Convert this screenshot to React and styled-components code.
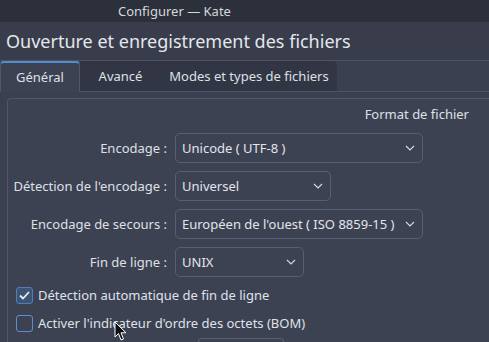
import React from 'react';
import styled, { createGlobalStyle } from 'styled-components';

const GlobalStyle = createGlobalStyle`
  html, body {
    margin: 0;
    padding: 0;
    background: #3b4050;
    overflow: hidden;
  }
  body {
    font-family: "Noto Sans", "DejaVu Sans", sans-serif;
    font-size: 13px;
    color: #dfe2e8;
  }
`;

const Window = styled.div`
  position: relative;
  width: 489px;
  height: 342px;
  overflow: hidden;
  background: #3b4050;
`;

const TitleBar = styled.div`
  height: 22px;
  background: #2c303a;
  color: #d4d7dd;
  font-size: 13px;
  display: flex;
  align-items: center;
  padding-left: 118px;
`;

const Header = styled.div`
  height: 38px;
  display: flex;
  align-items: center;
  padding-left: 6px;
  font-size: 18px;
  color: #e4e7ec;
  background: #383c4b;
  border-bottom: 1px solid #4d5262;
`;

const TabBar = styled.div`
  display: flex;
  height: 30px;
  border-bottom: 1px solid #4f5465;
`;

const Tab = styled.div`
  display: flex;
  align-items: center;
  justify-content: center;
  width: ${p => p.w}px;
  margin-bottom: ${p => (p.active ? '-1px' : '0')};
  background: ${p => (p.active ? '#3d4253' : '#323644')};
  border-left: ${p => (p.active ? '1px solid #525768' : 'none')};
  border-right: ${p => (p.active ? '1px solid #525768' : 'none')};
  border-top: ${p => (p.active ? '2px solid #4f8fd0' : 'none')};
  border-radius: ${p => (p.active ? '4px 4px 0 0' : p.last ? '0 4px 0 0' : '0')};
  color: #dde0e6;
  box-sizing: border-box;
  padding-bottom: ${p => (p.active ? '1px' : '0')};
`;

const Panel = styled.div`
  margin: 6px 0 0 7px;
  border: 1px solid #515667;
  border-right: none;
  border-bottom: none;
  border-radius: 4px 0 0 0;
  background: #3d4253;
  height: 260px;
  padding: 6px 0 0 0;
`;

const GroupTitle = styled.div`
  text-align: right;
  padding-right: 20px;
  height: 18px;
  color: #dde0e6;
`;

const Form = styled.div`
  display: grid;
  grid-template-columns: 159px auto;
  column-gap: 8px;
  row-gap: 8px;
  margin-top: 10px;
  align-items: center;
  justify-items: start;
`;

const Label = styled.div`
  justify-self: end;
  color: #dde0e6;
`;

const Combo = styled.div`
  width: ${p => p.w}px;
  height: 30px;
  box-sizing: border-box;
  border: 1px solid #5a5f70;
  border-radius: 5px;
  display: flex;
  align-items: center;
  justify-content: space-between;
  padding: 0 7px 0 6px;
  color: #e2e5ea;
`;

const Checks = styled.div`
  display: flex;
  flex-direction: column;
  gap: 10px;
  margin: 9px 0 0 8px;
`;

const CheckRow = styled.div`
  display: flex;
  align-items: center;
  gap: 5px;
  height: 18px;
`;

const Box = styled.div`
  width: 15px;
  height: 15px;
  border: 1px solid ${p => (p.checked ? '#4f7fb8' : '#5b8fcc')};
  border-radius: 3px;
  background: ${p => (p.checked ? '#3c5575' : 'transparent')};
  display: flex;
  align-items: center;
  justify-content: center;
`;

const Peek = styled.div`
  margin: 6px 0 0 190px;
  width: 84px;
  height: 4px;
  border: 1px solid #5a5f70;
  border-bottom: none;
  border-radius: 4px 4px 0 0;
`;

const Cursor = styled.svg`
  position: absolute;
  left: 114px;
  top: 321px;
`;

const Chevron = () => (
  <svg width="10" height="6" viewBox="0 0 10 6">
    <path d="M1 1 L5 5 L9 1" fill="none" stroke="#d8dbe1" strokeWidth="1.1" />
  </svg>
);

const Check = () => (
  <svg width="11" height="9" viewBox="0 0 11 9">
    <path d="M1 4.5 L4 7.5 L10 1" fill="none" stroke="#e8ebf0" strokeWidth="1.8" />
  </svg>
);

const rows = [
  { label: 'Encodage :', value: 'Unicode ( UTF-8 )', w: 248 },
  { label: "Détection de l'encodage :", value: 'Universel', w: 156 },
  { label: 'Encodage de secours :', value: "Européen de l'ouest ( ISO 8859-15 )", w: 248 },
  { label: 'Fin de ligne :', value: 'UNIX', w: 129 },
];

export default function App() {
  return (
    <Window>
      <GlobalStyle />
      <TitleBar>Configurer — Kate</TitleBar>
      <Header>Ouverture et enregistrement des fichiers</Header>
      <TabBar>
        <Tab w={80} active>Général</Tab>
        <Tab w={81}>Avancé</Tab>
        <Tab w={176} last>Modes et types de fichiers</Tab>
      </TabBar>
      <Panel>
        <GroupTitle>Format de fichier</GroupTitle>
        <Form>
          {rows.map(r => (
            <React.Fragment key={r.label}>
              <Label>{r.label}</Label>
              <Combo w={r.w}>
                <span>{r.value}</span>
                <Chevron />
              </Combo>
            </React.Fragment>
          ))}
        </Form>
        <Checks>
          <CheckRow>
            <Box checked><Check /></Box>
            <span>Détection automatique de fin de ligne</span>
          </CheckRow>
          <CheckRow>
            <Box />
            <span>Activer l'indicateur d'ordre des octets (BOM)</span>
          </CheckRow>
        </Checks>
        <Peek />
      </Panel>
      <Cursor width="14" height="21" viewBox="0 0 14 21">
        <path d="M1 1 L1 16 L4.5 12.5 L7 19 L9.5 18 L7 11.8 L12 11.8 Z" fill="#111" stroke="#fff" strokeWidth="1" />
      </Cursor>
    </Window>
  );
}
